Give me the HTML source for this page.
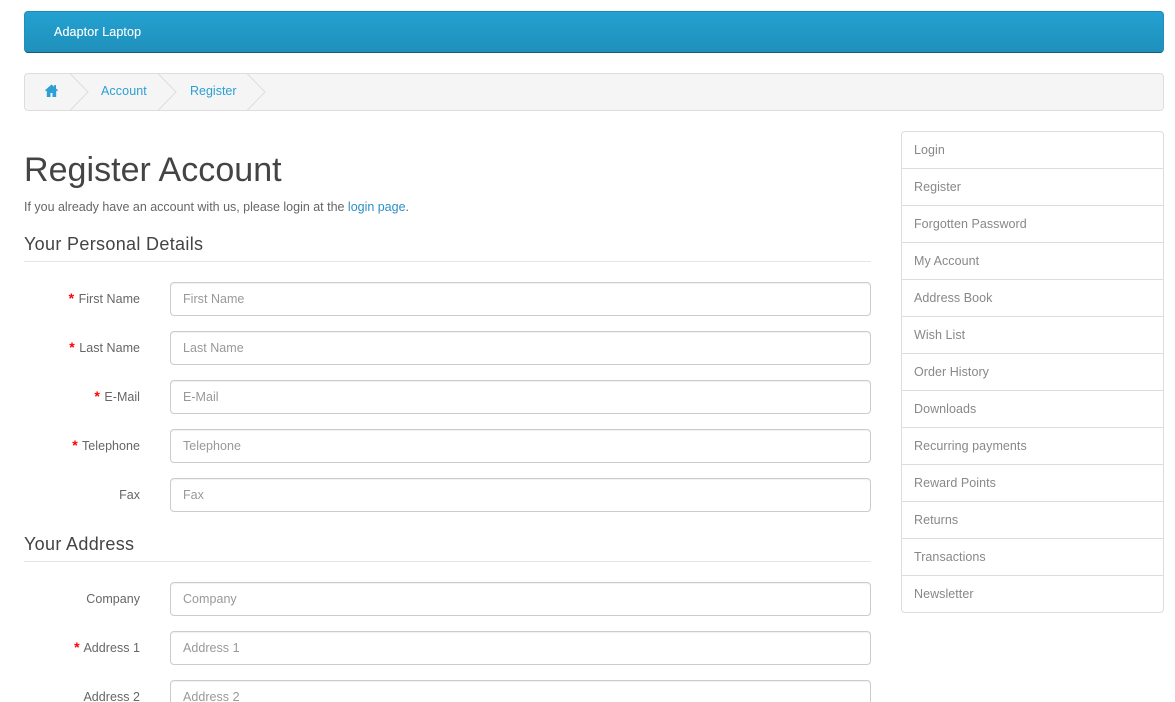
<!DOCTYPE html>
<html><head><meta charset="utf-8">
<style>
html,body{margin:0;padding:0;background:#fff;width:1175px;height:702px;overflow:hidden}
body{position:relative;font-family:"Liberation Sans",sans-serif;font-size:12.5px;color:#666}
a{text-decoration:none;color:#2d9fd3}
.a{position:absolute;white-space:nowrap}
#nav{left:24px;top:11px;width:1138px;height:40px;border:1px solid #1f90bb;border-bottom:1px solid #115f7c;border-top-color:#1b8cb5;border-radius:4px;background:linear-gradient(#23a1d1,#1f90bb)}
#nav span{position:absolute;left:29px;top:12px;color:#fff;font-size:12.5px;letter-spacing:.12px;line-height:16px;-webkit-text-stroke:.1px #fff}
#bc{left:24px;top:73px;width:1138px;height:36px;border:1px solid #ddd;border-radius:4px;background:#f5f5f5}
.lab{right:1035px;line-height:16px;text-align:right;letter-spacing:.03px;color:#666}
.lab b{color:#f00;font-weight:bold;font-size:14px;line-height:0;margin-right:1px}
.in{left:170px;width:699px;height:32px;border:1px solid #ccc;border-radius:4px;background:#fff;box-shadow:inset 0 1px 1px rgba(0,0,0,.06);padding:0;margin:0;box-sizing:content-box;color:#999;line-height:32px;text-indent:12px;letter-spacing:.03px}
h1,h2{margin:0;font-weight:normal;color:#444}
h1{left:24px;top:151px;font-size:34px;line-height:38px;letter-spacing:.04px}
h2{left:24px;font-size:18px;line-height:22px;letter-spacing:.33px}
.hr{left:24px;width:847px;height:1px;background:#e5e5e5}
#side{left:901px;top:131px;width:261px;height:480px;border:1px solid #ddd;border-radius:4px}
#side a{position:absolute;left:12px;color:#888;line-height:16px;letter-spacing:.05px}
#side i{position:absolute;left:0;width:261px;height:1px;background:#ddd}
</style></head><body>
<div class="a" id="nav"><span>Adaptor Laptop</span></div>
<div class="a" id="bc"></div>
<svg class="a" style="left:24px;top:73px" width="260" height="38" fill="none" stroke="#ddd">
<path d="M46 .5 64 19 46 37.5M134 .5 152 19 134 37.5M223 .5 241 19 223 37.5"/>
<path fill="#2d9fd3" stroke="none" d="M27.5 11.5 21 17.3l.9 1 .9-.8V24h3.7v-4h2v4h3.7v-6.5l.9.8.9-1-2-1.8V12h-1.8v1.7z"/>
</svg>
<a class="a" href="#" style="left:101px;top:83px;line-height:16px;letter-spacing:.1px">Account</a>
<a class="a" href="#" style="left:190px;top:83px;line-height:16px;letter-spacing:0">Register</a>

<h1 class="a">Register Account</h1>
<div class="a" style="left:24px;top:199px;line-height:16px;letter-spacing:-.01px">If you already have an account with us, please login at the <a href="#" style="color:#2f8fc4">login page</a>.</div>
<h2 class="a" style="top:233px">Your Personal Details</h2>
<div class="a hr" style="top:261px"></div>

<div class="a lab" style="top:291px"><b>*</b> First Name</div><div class="a in" style="top:282px">First Name</div>
<div class="a lab" style="top:340px"><b>*</b> Last Name</div><div class="a in" style="top:331px">Last Name</div>
<div class="a lab" style="top:389px"><b>*</b> E-Mail</div><div class="a in" style="top:380px">E-Mail</div>
<div class="a lab" style="top:438px"><b>*</b> Telephone</div><div class="a in" style="top:429px">Telephone</div>
<div class="a lab" style="top:487px">Fax</div><div class="a in" style="top:478px">Fax</div>

<h2 class="a" style="top:533px">Your Address</h2>
<div class="a hr" style="top:561px"></div>

<div class="a lab" style="top:591px">Company</div><div class="a in" style="top:582px">Company</div>
<div class="a lab" style="top:640px"><b>*</b> Address 1</div><div class="a in" style="top:631px">Address 1</div>
<div class="a lab" style="top:689px">Address 2</div><div class="a in" style="top:680px">Address 2</div>

<div class="a" id="side">
<a href="#" style="top:10px">Login</a><i style="top:36px"></i>
<a href="#" style="top:47px">Register</a><i style="top:73px"></i>
<a href="#" style="top:84px">Forgotten Password</a><i style="top:110px"></i>
<a href="#" style="top:121px">My Account</a><i style="top:147px"></i>
<a href="#" style="top:158px">Address Book</a><i style="top:184px"></i>
<a href="#" style="top:195px">Wish List</a><i style="top:221px"></i>
<a href="#" style="top:232px">Order History</a><i style="top:258px"></i>
<a href="#" style="top:269px">Downloads</a><i style="top:295px"></i>
<a href="#" style="top:306px">Recurring payments</a><i style="top:332px"></i>
<a href="#" style="top:343px">Reward Points</a><i style="top:369px"></i>
<a href="#" style="top:380px">Returns</a><i style="top:406px"></i>
<a href="#" style="top:417px">Transactions</a><i style="top:443px"></i>
<a href="#" style="top:454px">Newsletter</a>
</div>
</body></html>
